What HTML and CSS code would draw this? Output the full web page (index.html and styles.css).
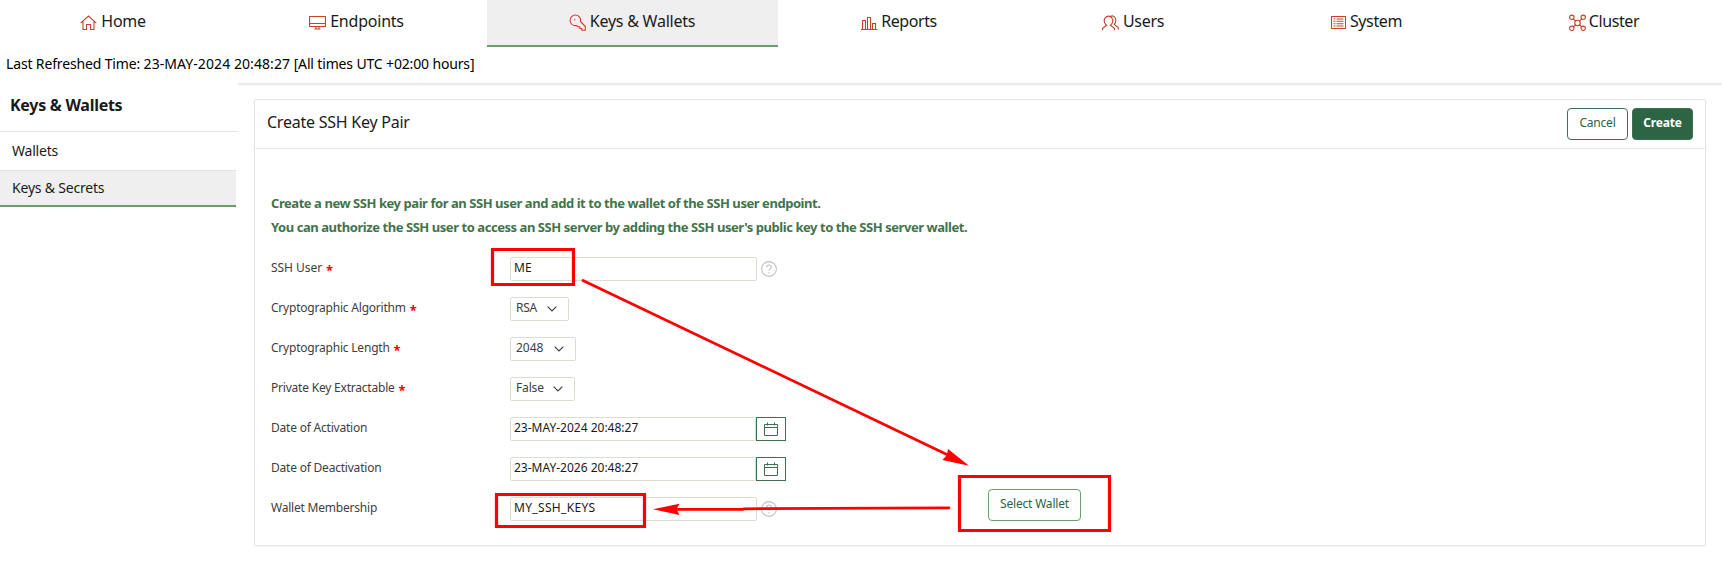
FILE: index.html
```html
<!DOCTYPE html>
<html lang="en">
<head>
<meta charset="utf-8">
<title>Create SSH Key Pair</title>
<link rel="stylesheet" href="styles.css">
</head>
<body>
<nav class="tabs">
  <a class="tab"><svg class="icon" viewBox="0 0 17 17"><path d="M.7 9.2 8.500 2 16.300 9.200M3 7.500V15.500H6.500V10.500H10.500V15.500H14V7.500"/></svg><span>Home</span></a>
  <a class="tab"><svg class="icon" viewBox="0 0 17 17"><path d="M.6 2.500H16.400V12.500H.6ZM.6 9.500H16.400M7 12.500V14.500M10 12.500V14.500M5.500 15H11.500"/></svg><span class="t-endpoints">Endpoints</span></a>
  <a class="tab active"><svg class="icon" viewBox="0 0 17 17"><path d="M7.500 11.500A5.300 5.300 0 1 1 11.500 7.500L16.300 12.500V16.300H12.800V14.500H10.800V12.700H8.800L7.500 11.500M5 5.700h1.300"/></svg><span class="t-keys">Keys &amp; Wallets</span></a>
  <a class="tab"><svg class="icon" viewBox="0 0 17 17"><path d="M0 15.500H16.500M1.500 15V6.500H4.500V15M6.500 15V3.500H9.500V15M11.500 15V9.500H14.500V15"/></svg><span class="t-reports">Reports</span></a>
  <a class="tab"><svg class="icon" viewBox="0 0 17 17"><path d="M.6 16.300V14.200L4.600 11.200A4.300 4.800 0 1 1 8.400 11.200L12.400 14.200V16.300M8.500 2.300C13 .2 15.600 6.500 12.200 10.500L16.300 13.500V15.500"/></svg><span class="t-users">Users</span></a>
  <a class="tab"><svg class="icon" viewBox="0 0 17 17"><path d="M1.500 2.500H15.500V14.500H1.500ZM3.500 5H5.500M6.500 5H13.500M3.500 7.300H5.500M6.500 7.300H13.500M3.500 9.700H5.500M6.500 9.700H13.500M3.500 12H5.500M6.500 12H13.500"/></svg><span class="t-system">System</span></a>
  <a class="tab"><svg class="icon" viewBox="0 0 17 17"><circle cx="8.500" cy="9" r="2.700"/><circle cx="2.800" cy="3.300" r="2.200"/><circle cx="14.200" cy="3.300" r="2.200"/><circle cx="2.800" cy="14.300" r="2.200"/><circle cx="14.200" cy="14.300" r="2.200"/><path d="M4.200 5 6.700 7.200M12.800 5 10.300 7.200M4.200 12.700 6.700 10.800M12.800 12.700 10.300 10.800"/></svg><span class="t-cluster">Cluster</span></a>
</nav>
<div class="refreshed"><span>Last Refreshed Time: <span class="stamp">23-MAY-2024 20:48:27</span> [All times UTC +02:00 hours]</span></div>
<div class="layout">
  <aside class="sidebar">
    <h2 class="side-title">Keys &amp; Wallets</h2>
    <a class="side-link">Wallets</a>
    <a class="side-link current">Keys &amp; Secrets</a>
  </aside>
  <main class="main">
    <section class="panel">
      <header class="panel-head">
        <h1 class="panel-title">Create SSH Key Pair</h1>
        <button class="btn">Cancel</button>
        <button class="btn primary">Create</button>
      </header>
      <div class="intro">
        <p>Create a new SSH key pair for an SSH user and add it to the wallet of the SSH user endpoint.</p>
        <p>You can authorize the SSH user to access an SSH server by adding the SSH user's public key to the SSH server wallet.</p>
      </div>
      <div class="form">
        <div class="row"><label class="label user">SSH User <b class="req">*</b></label><div class="field">ME</div><svg class="help" viewBox="0 0 16 16"><circle cx="8" cy="8" r="7.400"/><path d="M5.700 6.300C5.700 3.300 10.300 3.300 10.300 6.100 10.300 8 8 7.700 8 9.800M8 10.900V12.200"/></svg></div>
        <div class="row"><label class="label">Cryptographic Algorithm <b class="req">*</b></label><div class="select s-alg">RSA<svg class="chev" viewBox="0 0 10 6"><path d="M.7.700 5 5 9.300.700"/></svg></div></div>
        <div class="row"><label class="label">Cryptographic Length <b class="req">*</b></label><div class="select s-len">2048<svg class="chev" viewBox="0 0 10 6"><path d="M.7.700 5 5 9.300.700"/></svg></div></div>
        <div class="row"><label class="label">Private Key Extractable <b class="req">*</b></label><div class="select s-ext">False<svg class="chev" viewBox="0 0 10 6"><path d="M.7.700 5 5 9.300.700"/></svg></div></div>
        <div class="row"><label class="label">Date of Activation</label><div class="field date">23-MAY-2024 20:48:27</div><button class="cal"><svg viewBox="0 0 14 14"><path d="M.5 2.500H13.500V13.500H.5ZM.5 5.500H13.500M3.500.500V3.500M10.500.500V3.500"/></svg></button></div>
        <div class="row"><label class="label">Date of Deactivation</label><div class="field date">23-MAY-2026 20:48:27</div><button class="cal"><svg viewBox="0 0 14 14"><path d="M.5 2.500H13.500V13.500H.5ZM.5 5.500H13.500M3.500.500V3.500M10.500.500V3.500"/></svg></button></div>
        <div class="row"><label class="label">Wallet Membership</label><div class="field wallet">MY_SSH_KEYS</div><svg class="help" viewBox="0 0 16 16"><circle cx="8" cy="8" r="7.400"/><path d="M5.700 6.300C5.700 3.300 10.300 3.300 10.300 6.100 10.300 8 8 7.700 8 9.800M8 10.900V12.200"/></svg><button class="btn pick">Select Wallet</button></div>
      </div>
    </section>
  </main>
</div>
<svg class="marks" viewBox="0 0 1722 563">
  <g class="mark-lines">
    <path d="M492.500 249.500H573.500V284.500H492.500Z"/>
    <path d="M496.500 494.500H644.500V526.500H496.500Z"/>
    <path d="M959.500 476.500H1109.500V530.500H959.500Z"/>
    <path class="shaft" d="M583 280.500 950 456M677 509.300H743L744 508.800 949 507.800"/>
  </g>
  <path class="heads" d="M969 465.700 948 449 947 455 942.500 460ZM653 509.300 679.500 503.700 676.500 509.200 679.500 515Z"/>
</svg>
</body>
</html>
```
FILE: styles.css
```css
* { box-sizing: border-box; }
body {
  margin: 0;
  height: 563px;
  overflow: hidden;
  position: relative;
  background: #fff;
  color: #1a1a1a;
  font-family: "Noto Sans", sans-serif;
}
h1, h2, p { margin: 0; }
svg { display: block; fill: none; }

.tabs {
  display: grid;
  grid-template-columns: 226px 261px 291px 242px 226px 240px 236px;
  height: 47px;
}
.tab {
  display: flex;
  justify-content: center;
  align-items: flex-start;
  gap: 4px;
  padding-top: 10px;
  font-size: 16px;
  line-height: 22px;
  white-space: nowrap;
  border-bottom: 2px solid transparent;
  letter-spacing: -0.3px;
}
.tab.active { background: #efefef; border-bottom-color: #6b9e6b; }
.t-endpoints { letter-spacing: -0.22px; }
.t-keys { letter-spacing: -0.24px; margin-right: 1px; }
.t-reports { letter-spacing: -0.42px; margin-left: -1px; }
.t-system { letter-spacing: -0.36px; margin-left: -1px; }
.t-cluster { letter-spacing: -0.4px; margin-left: -1px; }
.icon { width: 17px; height: 17px; margin-top: 4px; stroke: #c8412c; stroke-width: 1.1; }

.refreshed {
  height: 36px;
  padding: 7px 0 0 6px;
  font-size: 14px;
  line-height: 20px;
  color: #000;
  white-space: nowrap;
  letter-spacing: -0.15px;
}
.stamp { letter-spacing: 0.08px; }
.layout { display: flex; height: 480px; }
.sidebar { width: 238px; flex: none; }
.side-title {
  height: 49px;
  padding: 10px 0 0 10px;
  font-size: 16px;
  line-height: 24px;
  letter-spacing: -0.27px;
  border-bottom: 1px solid #e6e6e6;
}
.side-link {
  display: block;
  height: 38px;
  padding: 9px 0 0 12px;
  font-size: 14px;
  line-height: 20px;
  letter-spacing: -0.2px;
}
.side-link.current {
  width: 236px;
  height: 37px;
  padding-top: 7px;
  background: #efefef;
  border-top: 1px solid #e2e2e2;
  border-bottom: 2px solid #6b9e6b;
}
.main {
  flex: 1;
  padding: 16px 16px 0;
  background: linear-gradient(#e6e6e6, #f3f3f3 2px, #fff 4px);
}
.panel {
  width: 1452px;
  height: 447px;
  border: 1px solid #e4e4e4;
  border-radius: 2px;
  background: #fff;
  box-shadow: 0 1px 2px rgba(0, 0, 0, .05);
}
.panel-head {
  display: flex;
  gap: 4px;
  height: 49px;
  padding: 8px 12px 0;
  border-bottom: 1px solid #e8e8e8;
}
.panel-title {
  flex: 1;
  font-size: 16px;
  font-weight: 400;
  line-height: 28px;
  letter-spacing: -0.24px;
}
.btn {
  width: 61px;
  height: 32px;
  padding: 0 0 2px;
  border: 1px solid #3c7050;
  border-radius: 4px;
  background: #fff;
  color: #2c6444;
  font: 12px/20px "Noto Sans", sans-serif;
  letter-spacing: -0.2px;
  white-space: nowrap;
}
.btn.primary { background: #2c6444; color: #fff; font-weight: 700; }
.intro {
  padding: 42px 0 0 16px;
  color: #41744a;
  font-size: 13px;
  font-weight: 700;
  line-height: 24px;
  white-space: nowrap;
  letter-spacing: -0.445px;
}
.form { padding: 18px 0 0 16px; }
.row { display: flex; height: 40px; }
.label {
  width: 239px;
  flex: none;
  font-size: 12px;
  line-height: 22px;
  color: #404040;
  white-space: nowrap;
  letter-spacing: -0.21px;
}
.label.user { letter-spacing: -0.05px; }
.req {
  display: inline-block;
  margin: 4px 0 0 1px;
  padding-top: 3px;
  color: #f00;
  font-size: 13px;
  line-height: 12px;
  vertical-align: top;
}
.field {
  width: 247px;
  height: 24px;
  padding-left: 3px;
  border: 1px solid #dfdcd3;
  border-radius: 2px;
  font-size: 12px;
  line-height: 20px;
}
.field.date { width: 246px; }
.field.wallet { letter-spacing: 0.33px; }
.select {
  display: flex;
  justify-content: space-between;
  height: 24px;
  padding: 0 11px 0 5px;
  border: 1px solid #dfdcd3;
  border-radius: 2px;
  font-size: 12px;
  line-height: 20px;
  color: #404040;
}
.s-alg { width: 59px; letter-spacing: -0.3px; }
.s-len { width: 66px; }
.s-ext { width: 65px; letter-spacing: -0.15px; }
.chev { width: 10px; height: 6px; margin-top: 8px; stroke: #404040; stroke-width: 1.2; }
.help { width: 16px; height: 16px; margin: 4px 0 0 4px; stroke: #c0c0c4; stroke-width: 1.1; }
.cal {
  display: grid;
  place-items: center;
  width: 30px;
  height: 24px;
  padding: 0;
  border: 1px solid #3c7050;
  background: #fff;
}
.cal svg { width: 14px; height: 14px; stroke: #3c7050; }
.btn.pick { width: 93px; margin: -8px 0 0 211px; border-color: #6b9e6b; }

.marks { position: absolute; left: 0; top: 0; width: 1722px; height: 563px; }
.mark-lines { stroke: #f00; stroke-width: 3.2; }
.mark-lines .shaft { stroke-width: 2.7; stroke-linecap: round; }
.heads { fill: #f00; }
```
